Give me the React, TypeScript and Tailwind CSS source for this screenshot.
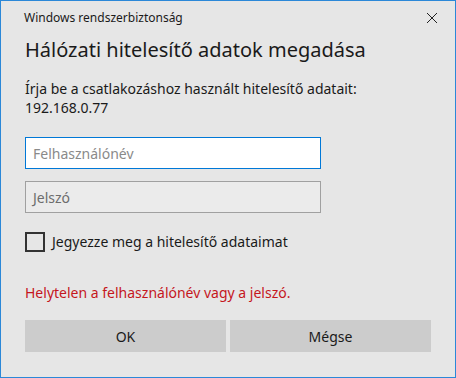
export default function App() {
  return (
    <div
      className="w-[456px] h-[378px] bg-[#e6e6e6] border border-[#2b88d8] flex flex-col text-[#1a1a1a]"
      style={{ fontFamily: '"Noto Sans", "Open Sans", sans-serif' }}
    >
      <div className="flex items-center justify-between pl-[23px] pr-[15px] h-[33px]">
        <span className="text-[12px] leading-none">Windows rendszerbiztonság</span>
        <svg width="12" height="12" viewBox="0 0 12 12" className="mr-[2px]">
          <path d="M1 1 L11 11 M11 1 L1 11" stroke="#222" strokeWidth="1" />
        </svg>
      </div>
      <div className="px-[24px] flex flex-col">
        <div className="text-[20px] leading-[28px] mt-[2px]">Hálózati hitelesítő adatok megadása</div>
        <div className="text-[14px] leading-[19px] mt-[15px]">
          Írja be a csatlakozáshoz használt hitelesítő adatait:
          <br />
          192.168.0.77
        </div>
        <div className="mt-[20px] w-[296px] h-[32px] border border-[#0078d7] bg-white flex items-center px-[7px] text-[14px] text-[#8a8a8a]">
          Felhasználónév
        </div>
        <div className="mt-[12px] w-[296px] h-[32px] border border-[#a0a0a0] bg-[#ebebeb] flex items-center px-[7px] text-[14px] text-[#6d6d6d]">
          Jelszó
        </div>
        <div className="mt-[18px] flex items-center">
          <div className="w-[20px] h-[20px] border-2 border-[#333]" />
          <span className="ml-[7px] text-[14px]">Jegyezze meg a hitelesítő adataimat</span>
        </div>
        <div className="mt-[31px] text-[14px] text-[#c5161d] leading-[20px]">
          Helytelen a felhasználónév vagy a jelszó.
        </div>
        <div className="mt-[17px] flex gap-[4px]">
          <div className="flex-1 h-[32px] bg-[#cccccc] flex items-center justify-center text-[14px]">OK</div>
          <div className="flex-1 h-[32px] bg-[#cccccc] flex items-center justify-center text-[14px]">Mégse</div>
        </div>
      </div>
    </div>
  );
}
